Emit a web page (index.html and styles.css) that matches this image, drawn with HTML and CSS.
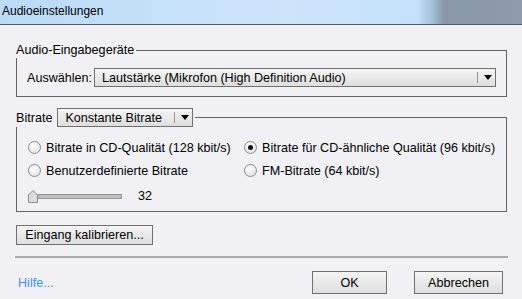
FILE: index.html
```html
<!DOCTYPE html>
<html lang="de">
<head>
  <meta charset="UTF-8">
  <title>Audioeinstellungen</title>
  <link rel="stylesheet" href="styles.css">
</head>
<body>
  <div class="titlebar">Audioeinstellungen</div>

  <div class="dialog">
    <!-- Eingabegeraete -->
    <fieldset class="group">
      <legend class="legend-text">Audio-Eingabegeräte</legend>
      <div class="group-body input-body">
        <span class="label">Auswählen:</span>
        <div class="combo combo-device">
          <span class="combo-value">Lautstärke (Mikrofon (High Definition Audio)</span>
          <span class="combo-arrow"></span>
        </div>
      </div>
    </fieldset>

    <!-- Bitrate -->
    <fieldset class="group group-bitrate">
      <legend class="legend-combo">
        <span class="label">Bitrate</span>
        <div class="combo combo-mode">
          <span class="combo-value">Konstante Bitrate</span>
          <span class="combo-arrow"></span>
        </div>
      </legend>
      <div class="group-body bitrate-body">
        <div class="radio-grid">
          <label class="radio"><span class="dot"></span>Bitrate in CD-Qualität (128 kbit/s)</label>
          <label class="radio checked"><span class="dot"></span>Bitrate für CD-ähnliche Qualität (96 kbit/s)</label>
          <label class="radio"><span class="dot"></span>Benutzerdefinierte Bitrate</label>
          <label class="radio"><span class="dot"></span>FM-Bitrate (64 kbit/s)</label>
        </div>
        <div class="slider-row">
          <div class="slider">
            <div class="track"></div>
            <svg class="thumb" width="10" height="13" viewBox="0 0 10 13">
              <path d="M0.5 5 L5 0.5 L9.5 5 L9.5 12.5 L0.5 12.5 Z" fill="#dcdcdc" stroke="#8c8c8c"/>
            </svg>
          </div>
          <span class="slider-value">32</span>
        </div>
      </div>
    </fieldset>

    <button class="btn btn-calibrate">Eingang kalibrieren...</button>

    <div class="separator"></div>

    <div class="footer">
      <a class="help" href="#">Hilfe...</a>
      <div class="footer-buttons">
        <button class="btn btn-ok">OK</button>
        <button class="btn btn-cancel">Abbrechen</button>
      </div>
    </div>
  </div>
</body>
</html>
```

FILE: styles.css
```css
/* Dialog base */
body {
  margin: 0;
  width: 522px;
  height: 299px;
  overflow: hidden;
  background: rgb(240, 240, 245);
  font-family: 'Liberation Sans', Arial, sans-serif;
  font-size: 12.6px;
  color: rgb(0, 0, 0);
}

/* Title bar */
.titlebar {
  height: 24px;
  line-height: 22px;
  padding-left: 2px;
  border-bottom: 1px solid rgb(80, 92, 104);
  background: linear-gradient(to right,
    rgb(186, 218, 246) 0%,
    rgb(205, 229, 251) 55%,
    rgb(196, 224, 250) 80%,
    rgb(160, 190, 215) 83%,
    rgb(137, 152, 168) 85%,
    rgb(141, 155, 170) 100%);
  font-size: 12px;
}

.dialog {
  padding: 18px 15px 0 16px;
}

/* Group boxes */
.group {
  margin: 0;
  padding: 0;
  border: 1px solid rgb(100, 100, 100);
  min-width: 0;
}

.group legend {
  padding: 0 2px 0 0;
  margin-left: -1px;
}

.legend-text {
  line-height: 15px;
}

.legend-combo {
  display: flex;
  align-items: center;
  gap: 5px;
}

.group-body {
  padding: 10px 10px 9px 10px;
}

.input-body {
  display: flex;
  align-items: center;
  gap: 2px;
}

.group-bitrate {
  margin-top: 11px;
}

.bitrate-body {
  padding: 13px 10px 8px 11px;
}

/* Combo boxes */
.combo {
  display: flex;
  align-items: center;
  height: 17px;
  border: 1px solid rgb(112, 112, 112);
  background: linear-gradient(to bottom, rgb(244, 244, 244), rgb(222, 222, 222));
}

.combo-value {
  flex: 1;
  padding-left: 7px;
  white-space: nowrap;
}

.combo-arrow {
  width: 17px;
  height: 11px;
  border-left: 1px solid rgb(150, 150, 150);
  position: relative;
}

.combo-arrow::after {
  content: '';
  position: absolute;
  left: 6px;
  top: 3px;
  border-left: 4px solid transparent;
  border-right: 4px solid transparent;
  border-top: 5px solid rgb(0, 0, 0);
}

.combo-device {
  width: 402px;
}

.combo-mode {
  width: 134px;
}

/* Radio buttons */
.radio-grid {
  display: grid;
  grid-template-columns: 216px auto;
  row-gap: 8px;
}

.radio {
  display: flex;
  align-items: center;
  gap: 5px;
  height: 15px;
  white-space: nowrap;
}

.dot {
  width: 11px;
  height: 11px;
  border: 1px solid rgb(140, 140, 140);
  border-radius: 50%;
  background: radial-gradient(circle at 40% 35%, rgb(255, 255, 255), rgb(218, 218, 218));
  position: relative;
}

.checked .dot::after {
  content: '';
  position: absolute;
  left: 3px;
  top: 3px;
  width: 5px;
  height: 5px;
  border-radius: 50%;
  background: rgb(20, 20, 20);
}

/* Slider */
.slider-row {
  display: flex;
  align-items: center;
  gap: 16px;
  margin-top: 11px;
}

.slider {
  position: relative;
  width: 94px;
  height: 13px;
  display: flex;
  align-items: center;
}

.track {
  width: 100%;
  height: 3px;
  border: 1px solid rgb(150, 150, 150);
  background: rgb(190, 190, 190);
}

.thumb {
  position: absolute;
  left: 0;
  top: 0;
}

/* Buttons */
.btn {
  font-family: inherit;
  font-size: 12.6px;
  color: rgb(0, 0, 0);
  border: 1px solid rgb(112, 112, 112);
  background: linear-gradient(to bottom, rgb(244, 244, 244), rgb(222, 222, 222));
  padding: 0;
  border-radius: 0;
}

.btn-calibrate {
  display: block;
  margin-top: 13px;
  width: 137px;
  height: 20px;
}

.separator {
  margin: 11px -1px 0 -1px;
  border-top: 2px solid rgb(170, 170, 170);
}

.footer {
  display: flex;
  justify-content: space-between;
  align-items: center;
  margin-top: 13px;
}

.help {
  color: rgb(70, 145, 218);
  text-decoration: none;
  margin-left: 2px;
}

.footer-buttons {
  display: flex;
  gap: 27px;
  margin-right: 4px;
}

.btn-ok {
  width: 75px;
  height: 23px;
}

.btn-cancel {
  width: 89px;
  height: 23px;
}
```
